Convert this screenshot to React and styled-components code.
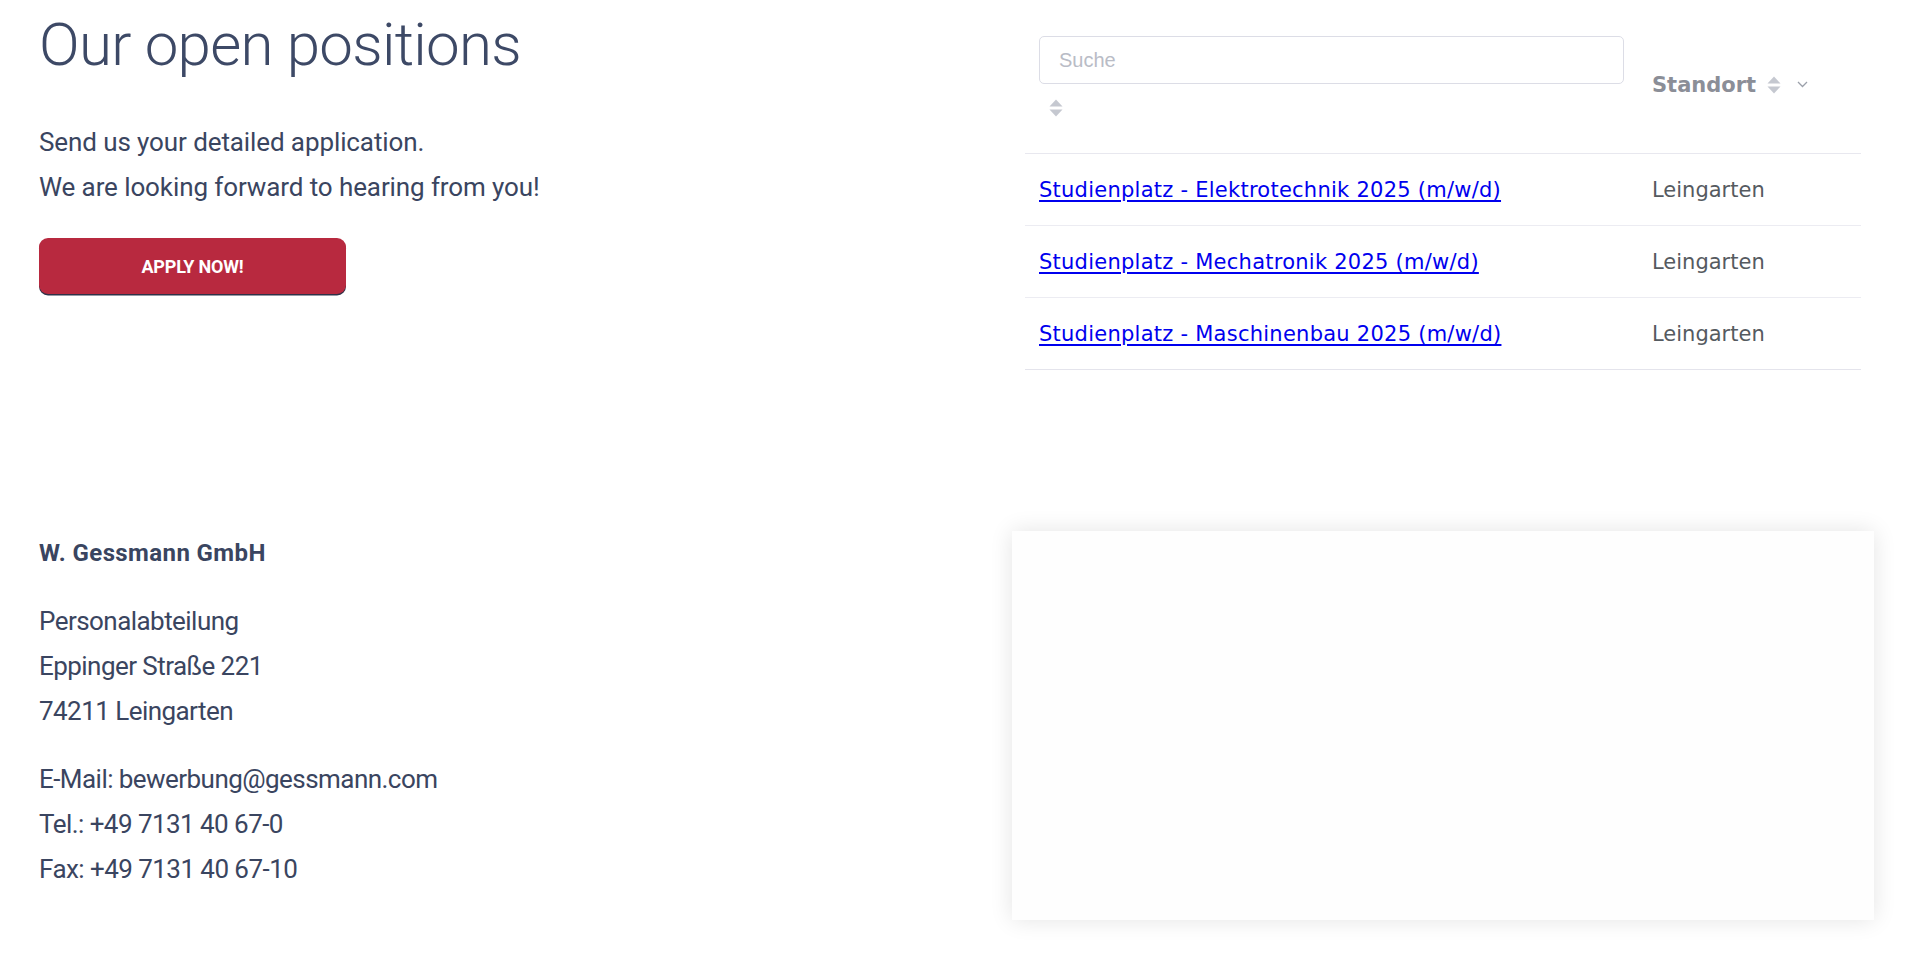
import React from "react";
import styled, { createGlobalStyle } from "styled-components";

const GlobalStyle = createGlobalStyle`
  html, body { margin: 0; padding: 0; background: #ffffff; }
  body { font-family: Roboto, "Noto Sans", sans-serif; color: #3a4560; }
  * { box-sizing: border-box; }
`;

const Page = styled.div`
  padding: 0 38px 40px 39px;
`;

const Section = styled.section`
  display: grid;
  grid-template-columns: 939px 862px;
  column-gap: 34px;
  align-items: start;
  margin-top: ${(p) => p.$top || 0}px;
`;

const Column = styled.div`
  display: flex;
  flex-direction: column;
  align-items: flex-start;
`;

const Title = styled.h1`
  margin: 9px 0 0;
  font-family: Roboto, sans-serif;
  font-weight: 300;
  font-size: 60px;
  line-height: 72px;
  letter-spacing: -0.7px;
  color: #3d4966;
`;

const Text = styled.p`
  margin: ${(p) => p.$mt || 0}px 0 0;
  font-family: Roboto, sans-serif;
  font-weight: 400;
  font-size: 26px;
  line-height: 45px;
  letter-spacing: ${(p) => (p.$wide ? "-0.1px" : "-0.55px")};
  color: #3a4560;
`;

const Company = styled.p`
  margin: 0;
  font-family: Roboto, sans-serif;
  font-weight: 700;
  font-size: 24px;
  line-height: 45px;
  letter-spacing: 0.4px;
  color: #3a4560;
`;

const ApplyButton = styled.button`
  margin-top: 28px;
  width: 307px;
  height: 56px;
  border: none;
  border-radius: 9px;
  background: #b8293f;
  box-shadow: 0 1.5px 0 #2f3148;
  color: #ffffff;
  font-family: Roboto, sans-serif;
  font-weight: 700;
  font-size: 18px;
  letter-spacing: -0.2px;
  text-transform: uppercase;
  cursor: pointer;
`;

const TableWrap = styled.div`
  padding: 0 13px;
`;

const Table = styled.table`
  width: 100%;
  border-collapse: collapse;
  font-family: "DejaVu Sans", Verdana, sans-serif;
`;

const HeadCell = styled.th`
  text-align: left;
  vertical-align: middle;
  padding: ${(p) => (p.$search ? "36px 14px 36px" : "16px 14px 0")};
  width: ${(p) => (p.$search ? "613px" : "auto")};
  border-bottom: 1px solid #e8e8ef;
`;

const SearchInput = styled.input`
  display: block;
  width: 100%;
  height: 48px;
  border: 1px solid #dcdde6;
  border-radius: 5px;
  padding: 0 19px;
  font-family: "Liberation Sans", Arial, sans-serif;
  font-size: 20px;
  color: #3a4560;
  outline: none;
  &::placeholder { color: #b9bcc6; }
`;

const SortBelow = styled.div`
  margin: 15px 0 0 10px;
  height: 18px;
  display: flex;
`;

const HeadLabel = styled.div`
  display: flex;
  align-items: center;
  font-family: "DejaVu Sans", Verdana, sans-serif;
  font-weight: 700;
  font-size: 21px;
  color: #8b8e97;
`;

const SortSlot = styled.span`
  display: inline-flex;
  margin-left: ${(p) => p.$ml || 0}px;
`;

const Row = styled.tr`
  border-bottom: 1px solid ${(p) => (p.$last ? "#e4e4ec" : "#ececf2")};
`;

const Cell = styled.td`
  height: 72px;
  padding: 0 14px;
  vertical-align: middle;
  font-size: 21px;
  color: #555a60;
`;

const JobLink = styled.a`
  color: #0000ee;
  text-decoration: underline;
  text-underline-offset: 3px;
  font-family: "DejaVu Sans", Verdana, sans-serif;
  font-size: 21px;
  letter-spacing: 0.25px;
`;

const MapBox = styled.div`
  height: 389px;
  background: #fefefe;
  box-shadow: 0 0 22px rgba(0, 0, 0, 0.11);
`;

const SortIcon = ({ color = "#c5c8d0" }) => (
  <svg width="14" height="18" viewBox="0 0 14 18">
    <polygon points="0.5,7.5 7,0.5 13.5,7.5" fill={color} />
    <polygon points="0.5,10.5 13.5,10.5 7,17.5" fill={color} />
  </svg>
);

const Chevron = () => (
  <svg width="11" height="7" viewBox="0 0 11 7">
    <polyline points="1,1 5.5,5.5 10,1" fill="none" stroke="#9ba0aa" strokeWidth="1.3" />
  </svg>
);

const jobs = [
  "Studienplatz - Elektrotechnik 2025 (m/w/d)",
  "Studienplatz - Mechatronik 2025 (m/w/d)",
  "Studienplatz - Maschinenbau 2025 (m/w/d)",
];

export default function App() {
  return (
    <Page>
      <GlobalStyle />
      <Section>
        <Column>
          <Title>Our open positions</Title>
          <Text $mt={39} $wide>
            Send us your detailed application.
            <br />
            We are looking forward to hearing from you!
          </Text>
          <ApplyButton>Apply now!</ApplyButton>
        </Column>
        <TableWrap>
          <Table>
            <thead>
              <tr>
                <HeadCell $search>
                  <SearchInput placeholder="Suche" />
                  <SortBelow>
                    <SortIcon />
                  </SortBelow>
                </HeadCell>
                <HeadCell>
                  <HeadLabel>
                    Standort
                    <SortSlot $ml={11}>
                      <SortIcon />
                    </SortSlot>
                    <SortSlot $ml={16}>
                      <Chevron />
                    </SortSlot>
                  </HeadLabel>
                </HeadCell>
              </tr>
            </thead>
            <tbody>
              {jobs.map((j, i) => (
                <Row key={j} $last={i === jobs.length - 1}>
                  <Cell>
                    <JobLink href="#">{j}</JobLink>
                  </Cell>
                  <Cell>Leingarten</Cell>
                </Row>
              ))}
            </tbody>
          </Table>
        </TableWrap>
      </Section>
      <Section $top={161}>
        <Column>
          <Company>W. Gessmann GmbH</Company>
          <Text $mt={23}>
            Personalabteilung
            <br />
            Eppinger Straße 221
            <br />
            74211 Leingarten
          </Text>
          <Text $mt={23}>
            E-Mail: bewerbung@gessmann.com
            <br />
            Tel.: +49 7131 40 67-0
            <br />
            Fax: +49 7131 40 67-10
          </Text>
        </Column>
        <MapBox />
      </Section>
    </Page>
  );
}
